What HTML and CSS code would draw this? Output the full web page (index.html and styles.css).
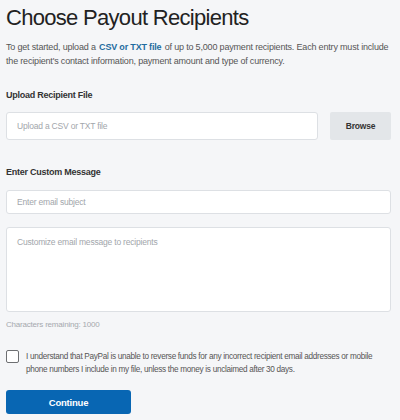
FILE: index.html
```html
<!DOCTYPE html>
<html lang="en">
<head>
    <meta charset="UTF-8">
    <meta name="viewport" content="width=device-width, initial-scale=1.0">
    <title>Choose Payout Recipients</title>
    <link rel="stylesheet" href="styles.css">
</head>
<body>

    <div class="page">
        <h1 class="title">Choose Payout Recipients</h1>
        <p class="intro">To get started, upload a <a href="#" class="link">CSV or TXT file</a> of up to 5,000 payment recipients. Each entry must include the recipient's contact information, payment amount and type of currency.</p>

        <label class="field-label upload-label">Upload Recipient File</label>
        <div class="upload-row">
            <input type="text" class="field file-field" placeholder="Upload a CSV or TXT file">
            <button type="button" class="browse-btn">Browse</button>
        </div>

        <label class="field-label message-label">Enter Custom Message</label>
        <input type="text" class="field subject-field" placeholder="Enter email subject">
        <textarea class="field message-field" placeholder="Customize email message to recipients"></textarea>
        <p class="counter">Characters remaining: 1000</p>

        <div class="agree-row">
            <span class="checkbox"></span>
            <p class="agree-text">I understand that PayPal is unable to reverse funds for any incorrect recipient email addresses or mobile phone numbers I include in my file, unless the money is unclaimed after 30 days.</p>
        </div>

        <button type="button" class="continue-btn">Continue</button>
    </div>

</body>
</html>
```

FILE: styles.css
```css
body {
    margin: 0;
    background-color: #f5f6f8;
    font-family: "Liberation Sans", Arial, sans-serif;
}
.page {
    padding: 0 9px 0 6px;
}
.title {
    margin: 5px 0 0;
    font-size: 22px;
    line-height: 26px;
    font-weight: normal;
    letter-spacing: -0.7px;
    color: #222;
}
.intro {
    margin: 9px 0 0;
    font-size: 9px;
    line-height: 14px;
    letter-spacing: -0.18px;
    color: #555;
}
.link {
    margin: 0 1px;
    color: #1f6c9f;
    font-weight: bold;
    text-decoration: none;
}
.field-label {
    display: block;
    font-size: 9px;
    line-height: 12px;
    font-weight: bold;
    letter-spacing: -0.25px;
    color: #333;
}
.upload-label {
    margin-top: 21px;
}
.message-label {
    margin-top: 26px;
}
.upload-row {
    display: flex;
    gap: 12px;
    margin-top: 11px;
    height: 28px;
}
.field {
    display: block;
    box-sizing: border-box;
    width: 100%;
    margin: 0;
    padding: 0 10px;
    border: 1px solid #dde0e4;
    border-radius: 3px;
    background-color: #fff;
    font-family: "Liberation Sans", Arial, sans-serif;
    font-size: 8.5px;
    letter-spacing: -0.2px;
    color: #333;
    outline: none;
}
.field::placeholder {
    color: #a2a6ab;
}
.file-field {
    flex: 1;
    height: 28px;
}
.browse-btn {
    width: 61px;
    height: 28px;
    border: none;
    border-radius: 2px;
    background-color: #e3e6e9;
    font-family: "Liberation Sans", Arial, sans-serif;
    font-size: 8.5px;
    font-weight: bold;
    letter-spacing: -0.2px;
    color: #333;
}
.subject-field {
    margin-top: 12px;
    height: 24px;
}
.message-field {
    margin-top: 13px;
    height: 85px;
    padding-top: 9px;
    resize: none;
}
.counter {
    margin: 7px 0 0;
    font-size: 8px;
    line-height: 12px;
    letter-spacing: -0.2px;
    color: #a5a9ae;
}
.agree-row {
    display: flex;
    gap: 7px;
    margin-top: 19px;
}
.checkbox {
    flex: none;
    width: 13px;
    height: 13px;
    box-sizing: border-box;
    border: 1px solid #6d6f72;
    border-radius: 2px;
    background-color: #fff;
}
.agree-text {
    margin: 0;
    font-size: 8.2px;
    line-height: 13px;
    letter-spacing: -0.3px;
    color: #555;
}
.continue-btn {
    display: block;
    margin-top: 14px;
    width: 125px;
    height: 24px;
    border: none;
    border-radius: 3px;
    background-color: #0866b3;
    font-family: "Liberation Sans", Arial, sans-serif;
    font-size: 9.5px;
    font-weight: bold;
    letter-spacing: -0.2px;
    color: #fff;
}
```
